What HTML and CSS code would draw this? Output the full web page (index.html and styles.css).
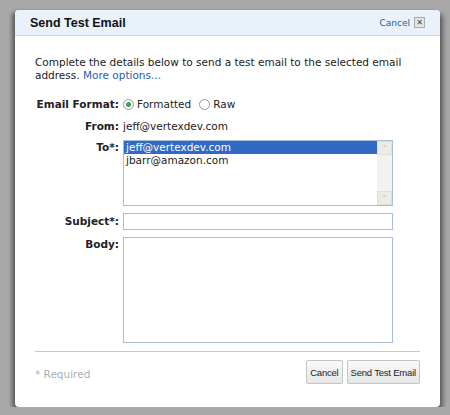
FILE: index.html
```html
<!DOCTYPE html>
<html lang="en">
<head>
    <meta charset="UTF-8">
    <title>Send Test Email</title>
    <link rel="stylesheet" href="styles.css">
</head>
<body>
    <div class="dialog">
        <div class="dialog-header">
            <h2>Send Test Email</h2>
            <a class="close-link" href="#">Cancel <span class="close-box">&#x2715;</span></a>
        </div>
        <div class="dialog-body">
            <p class="intro">Complete the details below to send a test email to the selected email <span>address.</span> <a class="more" href="#">More options...</a></p>

            <div class="form">
                <div class="row">
                    <label class="field-label">Email Format:</label>
                    <div class="field radios">
                        <span class="radio checked"></span><span>Formatted</span>
                        <span class="radio"></span><span>Raw</span>
                    </div>
                </div>
                <div class="row">
                    <label class="field-label">From:</label>
                    <div class="field">jeff@vertexdev.com</div>
                </div>
                <div class="row">
                    <label class="field-label">To*:</label>
                    <div class="field listbox">
                        <div class="options">
                            <div class="option selected">jeff@vertexdev.com</div>
                            <div class="option">jbarr@amazon.com</div>
                        </div>
                        <div class="scrollbar">
                            <div class="arrow">&#x2C4;</div>
                            <div class="arrow">&#x2C5;</div>
                        </div>
                    </div>
                </div>
                <div class="row">
                    <label class="field-label subject-label">Subject*:</label>
                    <div class="field input"></div>
                </div>
                <div class="row">
                    <label class="field-label">Body:</label>
                    <div class="field textarea"></div>
                </div>
            </div>

            <div class="footer">
                <span class="required">* Required</span>
                <div class="buttons">
                    <button>Cancel</button>
                    <button>Send Test Email</button>
                </div>
            </div>
        </div>
    </div>
</body>
</html>
```

FILE: styles.css
```css
body {
    margin: 0;
    background-color: #a9a9a9;
    font-family: 'DejaVu Sans', Verdana, sans-serif;
    font-size: 10.5px;
    color: #222;
}
a {
    color: #1f5ea8;
    text-decoration: none;
}
.dialog {
    margin: 10px 10px 0 15px;
    width: 425px;
    height: 397px;
    background-color: #fff;
    border-radius: 4px;
    box-shadow: -3px 2px 4px rgba(0, 0, 0, 0.45), 3px 4px 5px rgba(0, 0, 0, 0.45);
    overflow: hidden;
}
.dialog-header {
    display: flex;
    align-items: center;
    justify-content: space-between;
    height: 25px;
    padding: 0 15px;
    background-color: #e9f1fb;
    border-bottom: 1px solid #c8d8ec;
}
.dialog-header h2 {
    margin: 0;
    font-family: 'Liberation Sans', Arial, sans-serif;
    font-size: 12.5px;
    font-weight: bold;
    color: #111;
}
.close-link {
    display: flex;
    align-items: center;
    gap: 4px;
    font-size: 9px;
}
.close-box {
    display: inline-block;
    width: 9px;
    height: 9px;
    line-height: 9px;
    text-align: center;
    font-size: 8px;
    color: #444;
    background-color: #e4e4e4;
    border: 1px solid #aaa;
}
.dialog-body {
    padding: 20px 20px 0 20px;
}
.intro {
    margin: 0 0 15px 0;
    line-height: 13px;
}
.more {
    display: inline-block;
    line-height: 13px;
}
.form {
    display: flex;
    flex-direction: column;
    gap: 7px;
}
.form .row:first-child {
    margin-bottom: 1px;
}
.row {
    display: flex;
    gap: 4px;
}
.field-label {
    display: flex;
    justify-content: flex-end;
    width: 84px;
    white-space: nowrap;
    font-weight: bold;
    line-height: 14px;
}
.subject-label {
    line-height: 17px;
}
.field {
    line-height: 14px;
}
.radios {
    display: flex;
    align-items: center;
    gap: 3px;
}
.radio {
    width: 9px;
    height: 9px;
    border: 1px solid #8a98a6;
    border-radius: 50%;
    background: #fff;
    position: relative;
}
.radio.checked::after {
    content: "";
    position: absolute;
    left: 2px;
    top: 2px;
    width: 5px;
    height: 5px;
    border-radius: 50%;
    background-color: #3fa14a;
}
.radios .radio + span + .radio {
    margin-left: 5px;
}
.listbox {
    display: flex;
    width: 268px;
    height: 64px;
    border: 1px solid #a8bdd6;
}
.options {
    flex: 1;
}
.option {
    padding: 0 2px;
    line-height: 13px;
}
.option.selected {
    background-color: #316ac5;
    color: #fff;
}
.scrollbar {
    width: 15px;
    display: flex;
    flex-direction: column;
    justify-content: space-between;
    background-color: #f3f2ee;
}
.arrow {
    height: 14px;
    line-height: 14px;
    text-align: center;
    font-size: 9px;
    color: #b8b8b8;
    background-color: #ecebe6;
    border: 1px solid #e0dfd8;
    box-sizing: border-box;
}
.input {
    width: 268px;
    height: 15px;
    border: 1px solid #a8bdd6;
}
.textarea {
    width: 268px;
    height: 104px;
    border: 1px solid #a8bdd6;
}
.footer {
    display: flex;
    justify-content: space-between;
    align-items: flex-start;
    margin-top: 8px;
    padding-top: 8px;
    border-top: 1px solid #c8c8c8;
}
.required {
    color: #b0b0b0;
    margin-top: 8px;
}
.buttons {
    display: flex;
    gap: 4px;
}
button {
    font-family: 'Liberation Sans', Arial, sans-serif;
    font-size: 9.5px;
    letter-spacing: -0.2px;
    color: #222;
    height: 24px;
    padding: 0 3px;
    background: linear-gradient(#fafafa, #e6e6e6);
    border: 1px solid #c4c4c4;
    border-radius: 2px;
}
```
